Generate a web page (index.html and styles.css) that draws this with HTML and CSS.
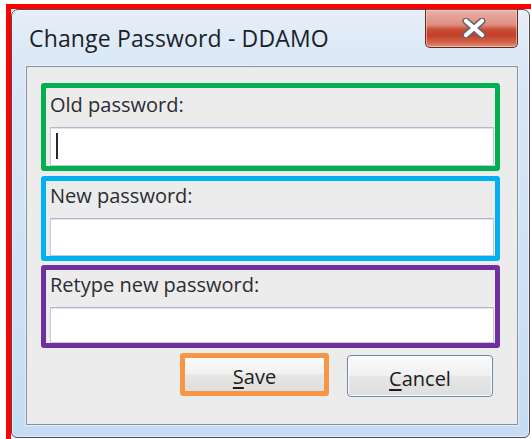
FILE: index.html
```html
<!DOCTYPE html>
<html lang="en">
<head>
<meta charset="utf-8">
<title>Change Password - DDAMO</title>
<link rel="stylesheet" href="styles.css">
</head>
<body>
<div class="outline">
  <div class="window">
    <div class="titlebar">
      <div class="title">Change Password - DDAMO</div>
      <button class="close" type="button" aria-label="Close">
        <svg width="26" height="20" viewBox="0 0 26 20" aria-hidden="true">
          <path d="M5 3 L21 17 M21 3 L5 17" stroke="#5f6670" stroke-width="7" stroke-linecap="round"/>
          <path d="M5 3 L21 17 M21 3 L5 17" stroke="#ffffff" stroke-width="4.2" stroke-linecap="round"/>
        </svg>
      </button>
    </div>
    <div class="panel">
      <div class="field field-old">
        <label class="field-label">Old password:</label>
        <div class="field-input input-old"><span class="caret"></span></div>
      </div>
      <div class="field field-new">
        <label class="field-label">New password:</label>
        <div class="field-input input-new"></div>
      </div>
      <div class="field field-retype">
        <label class="field-label">Retype new password:</label>
        <div class="field-input input-retype"></div>
      </div>
      <div class="actions">
        <button class="btn btn-save" type="button"><u>S</u>ave</button>
        <button class="btn btn-cancel" type="button"><u>C</u>ancel</button>
      </div>
    </div>
  </div>
</div>
</body>
</html>
```
FILE: styles.css
```css
html, body {
  margin: 0;
  padding: 0;
  background: #ffffff;
  overflow: hidden;
  font-family: "Open Sans", "Noto Sans", "DejaVu Sans", sans-serif;
}

/* red highlight around the whole dialog */
.outline {
  margin: 4px 0 0 6px;
  border: 5px solid #ff0000;
  width: 530px;
  height: 430px;
}

.window {
  box-sizing: border-box;
  width: 519px;
  height: 429px;
  border: 1px solid #464d58;
  border-radius: 7px 7px 6px 6px;
  background: linear-gradient(#e6eef8 0%, #d9e7f6 14%, #cfe1f5 60%, #c6dcf4 100%);
  box-shadow: inset 0 0 0 1px rgba(255, 255, 255, 0.55);
  padding: 0 11px 12px 14px;
  display: flex;
  flex-direction: column;
}

.titlebar {
  height: 56px;
  display: flex;
  justify-content: space-between;
  align-items: flex-start;
  flex: none;
}

.title {
  margin: 13px 0 0 3px;
  font-size: 23px;
  line-height: 30px;
  color: #1b1f28;
  letter-spacing: 0.15px;
}

.close {
  width: 93px;
  height: 39px;
  margin-top: -1px;
  padding: 0;
  border: 1px solid #5a2c26;
  border-top-color: #7a4a44;
  border-radius: 0 0 5px 5px;
  background: linear-gradient(#eab0a6 0%, #dd8f80 40%, #c9503a 52%, #c23f29 68%, #d3654c 88%, #e4927a 100%);
  box-shadow: inset 0 0 0 1px rgba(255, 220, 210, 0.55);
  display: flex;
  align-items: center;
  justify-content: center;
}

.close svg {
  display: block;
  margin: -2px 0 0 4px;
}

.panel {
  flex: 1;
  border: 1px solid #87909b;
  box-shadow: 0 0 0 1px rgba(255, 255, 255, 0.5);
  background: #ececec;
  padding: 16px 0 0 14px;
  display: flex;
  flex-direction: column;
}

.field {
  box-sizing: border-box;
  width: 459px;
  border: 5px solid;
  border-radius: 3px;
  padding: 3px 1px 0 4px;
  display: flex;
  flex-direction: column;
}

.field-old {
  border-color: #00b050;
  padding-top: 5px;
}

.field-new {
  border-color: #00b0f0;
  margin-top: 5px;
}

.field-retype {
  border-color: #7030a0;
  margin-top: 4px;
}

.field-label {
  font-size: 20px;
  line-height: 24px;
  color: #2a2d33;
  height: 24px;
}

.field-input {
  margin-top: 10px;
  box-sizing: border-box;
  background: #ffffff;
  border: 1px solid #c6c8da;
  border-top-color: #b3b6cc;
  box-shadow: inset 0 1px 0 #e2e3ee;
  position: relative;
}

.input-old { height: 39px; }
.input-new { height: 38px; }
.input-retype { height: 36px; }

.caret {
  position: absolute;
  left: 5px;
  top: 5px;
  width: 2px;
  height: 26px;
  background: #2a2a2a;
}

.actions {
  width: 459px;
  display: flex;
  justify-content: flex-end;
  align-items: flex-start;
  gap: 18px;
  padding-right: 7px;
  box-sizing: border-box;
  margin-top: 5px;
}

.btn {
  box-sizing: border-box;
  font-family: "Open Sans", "Noto Sans", "DejaVu Sans", sans-serif;
  font-size: 20px;
  line-height: 24px;
  color: #1c1c1c;
  padding: 5px 0 0;
  background: linear-gradient(#fbfbfb 0%, #f1f1f1 48%, #e6e6e6 52%, #dedede 100%);
}

.btn u {
  text-underline-offset: 3px;
  text-decoration-thickness: 2px;
}

.btn-save {
  width: 149px;
  height: 43px;
  border: 5px solid #f79646;
  border-radius: 3px;
}

.btn-cancel {
  width: 146px;
  height: 42px;
  margin-top: 2px;
  border: 1px solid #7089a8;
  border-radius: 4px;
  box-shadow: inset 0 0 0 1px #fdfdfd;
}
```
